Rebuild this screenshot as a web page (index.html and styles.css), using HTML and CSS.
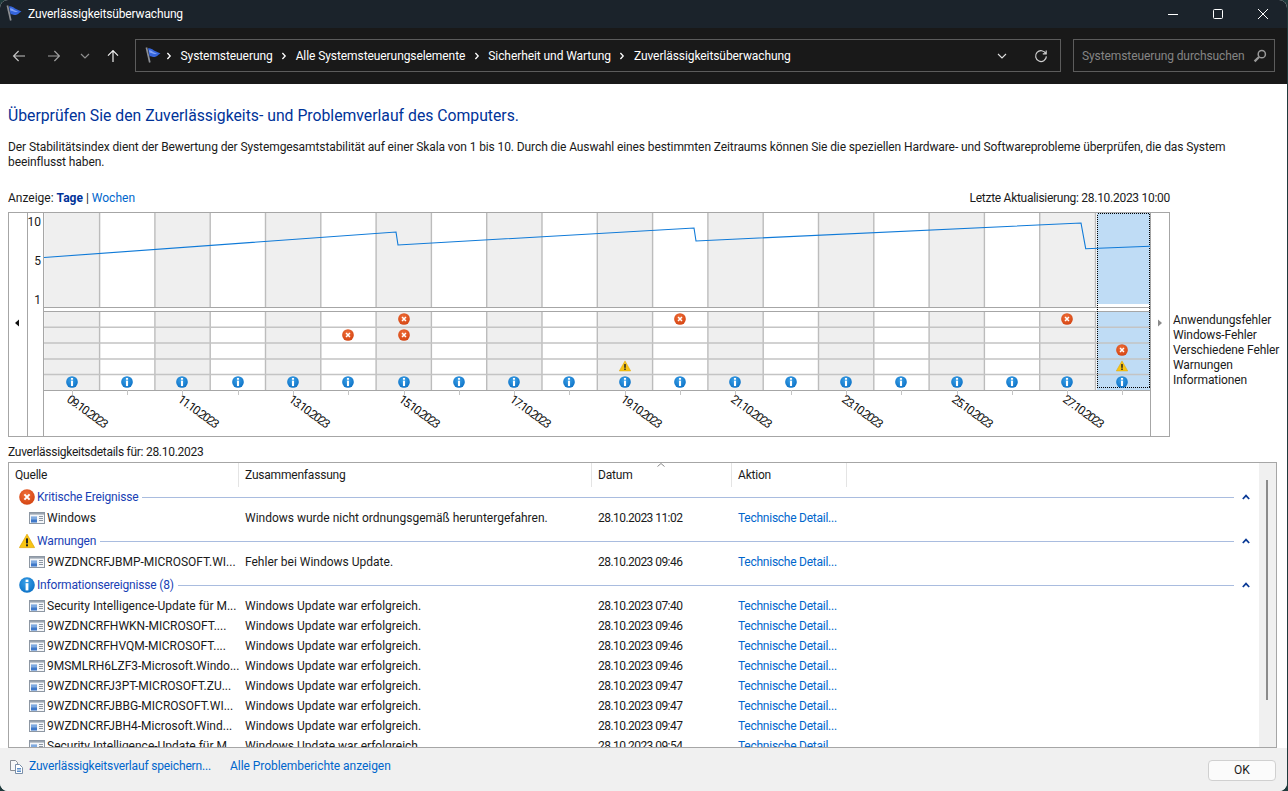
FILE: index.html
```html
<!DOCTYPE html>
<html lang="de">
<head>
<meta charset="utf-8">
<title>Zuverlässigkeitsüberwachung</title>
<link rel="stylesheet" href="styles.css">
</head>
<body>
<svg class="defs" aria-hidden="true">
  <defs>
    <radialGradient id="gErr" cx="45%" cy="35%" r="70%"><stop offset="0" stop-color="#f0703a"/><stop offset="1" stop-color="#d2410f"/></radialGradient>
    <radialGradient id="gInfo" cx="45%" cy="35%" r="70%"><stop offset="0" stop-color="#3aa0e8"/><stop offset="1" stop-color="#0a6fc4"/></radialGradient>
    <symbol id="err" viewBox="0 0 16 16"><circle cx="8" cy="8" r="7.8" fill="url(#gErr)"/><path d="M5.4 5.4l5.2 5.2M10.6 5.4l-5.2 5.2" stroke="#fff" stroke-width="2" fill="none"/></symbol>
    <symbol id="info" viewBox="0 0 16 16"><circle cx="8" cy="8" r="7.8" fill="url(#gInfo)"/><rect x="6.6" y="2.6" width="2.8" height="2.4" fill="#fff"/><rect x="6.6" y="6.2" width="2.8" height="7.2" fill="#fff"/></symbol>
    <symbol id="warn" viewBox="0 0 16 16"><path d="M8 1.2L15.6 14.6H.4Z" fill="#f8c514" stroke="#e0a400" stroke-width=".7" stroke-linejoin="round"/><rect x="7" y="5.4" width="2" height="5" fill="#222"/><rect x="7" y="11.3" width="2" height="2" fill="#222"/></symbol>
    <symbol id="flag" viewBox="0 0 17 18"><path d="M1.4 .5L4.8 15.5" stroke="#8c8f94" stroke-width="1.7" fill="none"/><path d="M3 1.5C5 .8 7 2 9 3.5L15.5 6.5C13 7.5 12 10 9 10C7.5 10 6 8.5 4.6 9.5Z" fill="#3565dc"/><path d="M4 3.4C6 3 7 4.6 9 5.6L12 6.8C10 7.6 8 6.8 4.4 5.6Z" fill="#7fa0f5"/></symbol>
    <symbol id="rowicon" viewBox="0 0 16 12"><rect x=".5" y=".5" width="15" height="11" fill="#f4f6f9" stroke="#8d97a3"/><rect x="1" y="1" width="14" height="1.6" fill="#9aa4b0"/><rect x="2" y="4.4" width="6" height="6" fill="#7faae0"/><rect x="2" y="7.5" width="6" height="2.9" fill="#3f78c8"/><path d="M10 4.5h4M10 6.5h4M10 8.5h4" stroke="#8d97a3" fill="none"/></symbol>
    <symbol id="up" viewBox="0 0 8 6"><path d="M.8 5L4 1.6 7.2 5" stroke="#0a3a96" stroke-width="1.7" fill="none"/></symbol>
    <symbol id="crumb" viewBox="0 0 6 8"><path d="M1.4 1l2.8 3-2.8 3" stroke="#fff" stroke-width="1.3" fill="none"/></symbol>
  </defs>
</svg>

<div class="window">
  <header class="titlebar">
    <svg class="ico-flag"><use href="#flag"/></svg>
    <span class="title">Zuverlässigkeitsüberwachung</span>
    <div class="winctrls">
      <svg class="winbtn" viewBox="0 0 12 12"><path d="M1 6.5h10" stroke="#fff" fill="none"/></svg>
      <svg class="winbtn" viewBox="0 0 12 12"><rect x="1.5" y="1.5" width="9" height="9" rx="1" stroke="#fff" fill="none"/></svg>
      <svg class="winbtn" viewBox="0 0 12 12"><path d="M1 1l10 10M11 1L1 11" stroke="#fff" fill="none"/></svg>
    </div>
  </header>

  <nav class="navbar">
    <svg class="navbtn" viewBox="0 0 14 14"><path d="M13 7H1.6M6.6 2L1.6 7l5 5" stroke="#c4c4c4" stroke-width="1.2" fill="none"/></svg>
    <svg class="navbtn" viewBox="0 0 14 14"><path d="M1 7h11.4M7.4 2l5 5-5 5" stroke="#a0a0a0" stroke-width="1.2" fill="none"/></svg>
    <svg class="navbtn small" viewBox="0 0 10 6"><path d="M1 1l4 4 4-4" stroke="#8e8e8e" stroke-width="1.2" fill="none"/></svg>
    <svg class="navbtn up" viewBox="0 0 14 14"><path d="M7 13V1.6M2 6.6l5-5 5 5" stroke="#f0f0f0" stroke-width="1.2" fill="none"/></svg>
    <div class="address">
      <svg class="ico-flag"><use href="#flag"/></svg>
      <svg class="crumb-sep"><use href="#crumb"/></svg><span>Systemsteuerung</span>
      <svg class="crumb-sep"><use href="#crumb"/></svg><span>Alle Systemsteuerungselemente</span>
      <svg class="crumb-sep"><use href="#crumb"/></svg><span>Sicherheit und Wartung</span>
      <svg class="crumb-sep"><use href="#crumb"/></svg><span>Zuverlässigkeitsüberwachung</span>
      <svg class="addr-drop" viewBox="0 0 10 6"><path d="M1 1l4 4 4-4" stroke="#e0e0e0" stroke-width="1.1" fill="none"/></svg>
      <svg class="addr-refresh" viewBox="0 0 14 14"><path d="M11.8 4.6A5.4 5.4 0 1 0 12.4 7.4M12.2 1.4v3.4H8.8" stroke="#cfcfcf" stroke-width="1.2" fill="none"/></svg>
    </div>
    <div class="search">
      <span>Systemsteuerung durchsuchen</span>
      <svg class="search-ico" viewBox="0 0 14 14"><circle cx="8.8" cy="5.2" r="3.6" stroke="#9a9a9a" stroke-width="1.5" fill="none"/><path d="M6 8L1.6 12.4" stroke="#9a9a9a" stroke-width="2.2" fill="none"/></svg>
    </div>
  </nav>

  <main class="content">
    <h1>Überprüfen Sie den Zuverlässigkeits- und Problemverlauf des Computers.</h1>
    <p class="intro">Der Stabilitätsindex dient der Bewertung der Systemgesamtstabilität auf einer Skala von 1 bis 10. Durch die Auswahl eines bestimmten Zeitraums können Sie die speziellen Hardware- und Softwareprobleme überprüfen, die das System beeinflusst haben.</p>

    <div class="viewbar">
      <div>Anzeige: <a class="active">Tage</a> | <a>Wochen</a></div>
      <div class="updated">Letzte Aktualisierung: 28.10.2023 10:00</div>
    </div>

    <div class="chart-row">
      <svg class="chart" viewBox="8 212 1162 225" width="1162" height="225">
        <path fill="#efefef" d="M44.3 213h55.3v177h-55.3zM154.9 213h55.3v177h-55.3zM265.5 213h55.3v177h-55.3zM376.1 213h55.3v177h-55.3zM486.7 213h55.3v177h-55.3zM597.3 213h55.3v177h-55.3zM707.9 213h55.3v177h-55.3zM818.5 213h55.3v177h-55.3zM929.1 213h55.3v177h-55.3zM1039.7 213h55.3v177h-55.3z"/>
        <rect x="1097" y="213" width="53" height="177" fill="#bfdcf5"/>
        <rect x="1097" y="304" width="53" height="3" fill="#fff"/>
        <path stroke="#bcbcbc" stroke-width="1.4" fill="none" d="M99.6 213v177M154.9 213v177M210.2 213v177M265.5 213v177M320.8 213v177M376.1 213v177M431.4 213v177M486.7 213v177M542 213v177M597.3 213v177M652.6 213v177M707.9 213v177M763.2 213v177M818.5 213v177M873.8 213v177M929.1 213v177M984.4 213v177M1039.7 213v177M1095.5 213v177"/>
        <rect x="44" y="307" width="1106" height="5" fill="#fff"/>
        <path stroke="#c4c4c4" stroke-width="1.5" fill="none" d="M44 327.3h1106M44 343h1106M44 359h1106M44 374.6h1106"/>
        <path stroke="#a6a6a6" fill="none" d="M44 307.5h1106M44 311.5h1106M44 390.5h1106"/>
        <rect x="8.5" y="212.5" width="1161" height="224" fill="none" stroke="#a6a6a6"/>
        <path stroke="#a6a6a6" fill="none" d="M27.5 212v225M43.5 212v225M1150.5 212v225"/>
        <rect class="focus" x="1097.5" y="213.5" width="52" height="174" fill="none" stroke="#000" stroke-dasharray="1 1"/>
        <polyline fill="none" stroke="#0f7ad8" stroke-width="1.1" points="44,257.5 396,232 398,245 694,228 696,241 1081,223 1085.7,248.7 1150,246.3"/>
        <path fill="#111" d="M19 319.5v7l-4-3.5z"/>
        <path fill="#8a8a8a" d="M1158 319.5v7l4-3.5z"/>
        <g class="axis">
          <text x="41" y="226">10</text>
          <text x="41" y="265">5</text>
          <text x="41" y="304">1</text>
        </g>
        <path stroke="#c4c4c4" fill="none" d="M72.5 390v5M127.5 390v5M182.5 390v5M238.5 390v5M293.5 390v5M348.5 390v5M404.5 390v5M459.5 390v5M514.5 390v5M569.5 390v5M625.5 390v5M680.5 390v5M735.5 390v5M791.5 390v5M846.5 390v5M901.5 390v5M957.5 390v5M1012.5 390v5M1067.5 390v5M1122.5 390v5"/>
        <use href="#info" x="66" y="376" width="12" height="12"/><use href="#info" x="121" y="376" width="12" height="12"/><use href="#info" x="176" y="376" width="12" height="12"/><use href="#info" x="232" y="376" width="12" height="12"/><use href="#info" x="287" y="376" width="12" height="12"/><use href="#info" x="342" y="376" width="12" height="12"/><use href="#info" x="398" y="376" width="12" height="12"/><use href="#info" x="453" y="376" width="12" height="12"/><use href="#info" x="508" y="376" width="12" height="12"/><use href="#info" x="563" y="376" width="12" height="12"/><use href="#info" x="619" y="376" width="12" height="12"/><use href="#info" x="674" y="376" width="12" height="12"/><use href="#info" x="729" y="376" width="12" height="12"/><use href="#info" x="785" y="376" width="12" height="12"/><use href="#info" x="840" y="376" width="12" height="12"/><use href="#info" x="895" y="376" width="12" height="12"/><use href="#info" x="951" y="376" width="12" height="12"/><use href="#info" x="1006" y="376" width="12" height="12"/><use href="#info" x="1061" y="376" width="12" height="12"/><use href="#info" x="1116" y="376" width="12" height="12"/>
        <use href="#err" x="398" y="313" width="12" height="12"/><use href="#err" x="674" y="313" width="12" height="12"/><use href="#err" x="1061" y="313" width="12" height="12"/>
        <use href="#err" x="342" y="329" width="12" height="12"/><use href="#err" x="398" y="329" width="12" height="12"/>
        <use href="#err" x="1116" y="344" width="12" height="12"/>
        <use href="#warn" x="619" y="360" width="12" height="12"/><use href="#warn" x="1116" y="360" width="12" height="12"/>
        <g class="dates">
          <text transform="translate(66 401) rotate(36)">09.10.2023</text>
          <text transform="translate(177 401) rotate(36)">11.10.2023</text>
          <text transform="translate(288 401) rotate(36)">13.10.2023</text>
          <text transform="translate(398 401) rotate(36)">15.10.2023</text>
          <text transform="translate(509 401) rotate(36)">17.10.2023</text>
          <text transform="translate(620 401) rotate(36)">19.10.2023</text>
          <text transform="translate(730 401) rotate(36)">21.10.2023</text>
          <text transform="translate(841 401) rotate(36)">23.10.2023</text>
          <text transform="translate(951 401) rotate(36)">25.10.2023</text>
          <text transform="translate(1062 401) rotate(36)">27.10.2023</text>
        </g>
      </svg>
      <ul class="legend">
        <li>Anwendungsfehler</li>
        <li>Windows-Fehler</li>
        <li>Verschiedene Fehler</li>
        <li>Warnungen</li>
        <li>Informationen</li>
      </ul>
    </div>

    <div class="details-label">Zuverlässigkeitsdetails für: 28.10.2023</div>

    <section class="table">
      <div class="table-main">
        <div class="thead">
          <div>Quelle</div><div>Zusammenfassung</div><div class="th-date">Datum<svg class="sort" viewBox="0 0 8 4"><path d="M.5 3.5L4 .5l3.5 3" stroke="#8a8a8a" fill="none"/></svg></div><div>Aktion</div>
        </div>
        <div class="tbody">
          <div class="group"><svg class="group-ico"><use href="#err"/></svg><span>Kritische Ereignisse</span><i></i><svg class="group-up"><use href="#up"/></svg></div>
          <div class="row"><div class="src"><svg class="row-ico"><use href="#rowicon"/></svg>Windows</div><div>Windows wurde nicht ordnungsgemäß heruntergefahren.</div><div>28.10.2023 11:02</div><a>Technische Detail...</a></div>
          <div class="group"><svg class="group-ico"><use href="#warn"/></svg><span>Warnungen</span><i></i><svg class="group-up"><use href="#up"/></svg></div>
          <div class="row"><div class="src"><svg class="row-ico"><use href="#rowicon"/></svg>9WZDNCRFJBMP-MICROSOFT.WI...</div><div>Fehler bei Windows Update.</div><div>28.10.2023 09:46</div><a>Technische Detail...</a></div>
          <div class="group"><svg class="group-ico"><use href="#info"/></svg><span>Informationsereignisse (8)</span><i></i><svg class="group-up"><use href="#up"/></svg></div>
          <div class="row"><div class="src"><svg class="row-ico"><use href="#rowicon"/></svg>Security Intelligence-Update für M...</div><div>Windows Update war erfolgreich.</div><div>28.10.2023 07:40</div><a>Technische Detail...</a></div>
          <div class="row"><div class="src"><svg class="row-ico"><use href="#rowicon"/></svg>9WZDNCRFHWKN-MICROSOFT....</div><div>Windows Update war erfolgreich.</div><div>28.10.2023 09:46</div><a>Technische Detail...</a></div>
          <div class="row"><div class="src"><svg class="row-ico"><use href="#rowicon"/></svg>9WZDNCRFHVQM-MICROSOFT....</div><div>Windows Update war erfolgreich.</div><div>28.10.2023 09:46</div><a>Technische Detail...</a></div>
          <div class="row"><div class="src"><svg class="row-ico"><use href="#rowicon"/></svg>9MSMLRH6LZF3-Microsoft.Windo...</div><div>Windows Update war erfolgreich.</div><div>28.10.2023 09:46</div><a>Technische Detail...</a></div>
          <div class="row"><div class="src"><svg class="row-ico"><use href="#rowicon"/></svg>9WZDNCRFJ3PT-MICROSOFT.ZU...</div><div>Windows Update war erfolgreich.</div><div>28.10.2023 09:47</div><a>Technische Detail...</a></div>
          <div class="row"><div class="src"><svg class="row-ico"><use href="#rowicon"/></svg>9WZDNCRFJBBG-MICROSOFT.WI...</div><div>Windows Update war erfolgreich.</div><div>28.10.2023 09:47</div><a>Technische Detail...</a></div>
          <div class="row"><div class="src"><svg class="row-ico"><use href="#rowicon"/></svg>9WZDNCRFJBH4-Microsoft.Wind...</div><div>Windows Update war erfolgreich.</div><div>28.10.2023 09:47</div><a>Technische Detail...</a></div>
          <div class="row"><div class="src"><svg class="row-ico"><use href="#rowicon"/></svg>Security Intelligence-Update für M...</div><div>Windows Update war erfolgreich.</div><div>28.10.2023 09:54</div><a>Technische Detail...</a></div>
        </div>
      </div>
      <div class="scrollbar"><div class="thumb"></div></div>
    </section>
  </main>

  <footer class="footer">
    <svg class="doc-ico" viewBox="0 0 15 16"><path d="M1.5 1.5h5l2 2v8h-7z" fill="#f8f8f8" stroke="#8a8f96"/><path d="M6.5 5.5h4l3 3v6h-7z" fill="#fff" stroke="#7a8fa8"/><path d="M8 9.5h4M8 11h4M8 12.5h4" stroke="#5c8fcb" fill="none"/></svg>
    <a>Zuverlässigkeitsverlauf speichern...</a>
    <a class="second">Alle Problemberichte anzeigen</a>
    <button class="ok" type="button">OK</button>
  </footer>
</div>
</body>
</html>
```

FILE: styles.css
```css
* { box-sizing: border-box; }
html, body { margin: 0; padding: 0; height: 100%; }
body {
  background: #1f3a3c;
  font-family: Roboto, "Open Sans", "Liberation Sans", sans-serif;
  font-size: 12px;
  color: #1a1a1a;
  overflow: hidden;
}
.defs { display: block; width: 0; height: 0; }
.window {
  width: 1287px;
  height: 791px;
  display: flex;
  flex-direction: column;
  border-radius: 8px;
  overflow: hidden;
  background: #fff;
}

/* title bar */
.titlebar {
  height: 28px;
  flex: none;
  display: flex;
  align-items: center;
  background: #1b232b;
  color: #fff;
  padding-left: 6px;
}
.ico-flag { width: 17px; height: 18px; flex: none; }
.title { margin-left: 5px; letter-spacing: -0.15px; }
.winctrls { margin-left: auto; display: flex; gap: 33px; padding-right: 18px; }
.winbtn { width: 12px; height: 12px; }

/* nav */
.navbar {
  height: 56px;
  flex: none;
  display: flex;
  align-items: center;
  background: #191919;
  color: #fff;
  padding: 0 12px 1px 12px;
}
.navbtn { width: 14px; height: 14px; margin-right: 21px; flex: none; }
.navbtn.small { width: 10px; height: 6px; margin-right: 16px; margin-left: -2px; }
.navbtn.up { margin-right: 15px; }
.address {
  width: 926px;
  height: 33px;
  display: flex;
  align-items: center;
  border: 1px solid #5c5c5c;
  padding-left: 9px;
  letter-spacing: -0.08px;
}
.crumb-sep { width: 6px; height: 8px; margin: 0 8.5px; flex: none; }
.address .ico-flag + .crumb-sep { margin-left: 4px; }
.addr-drop { width: 10px; height: 6px; margin-left: auto; flex: none; }
.addr-refresh { width: 14px; height: 14px; margin: 0 12px 0 27px; flex: none; }
.search {
  width: 202px;
  height: 33px;
  margin-left: 12px;
  display: flex;
  align-items: center;
  justify-content: space-between;
  border: 1px solid #5c5c5c;
  padding: 0 7px 0 8px;
  color: #858585;
  letter-spacing: -0.1px;
}
.search-ico { width: 14px; height: 14px; flex: none; }

/* content */
.content {
  flex: 1;
  min-height: 0;
  display: flex;
  flex-direction: column;
  padding: 21px 10px 0 8px;
}
h1 {
  margin: 0;
  font-size: 15.75px;
  font-weight: 400;
  line-height: 21px;
  color: #003399;
}
.intro {
  margin: 14px 0 0;
  line-height: 15px;
  width: 1240px;
  letter-spacing: -0.1px;
}
.viewbar {
  margin-top: 19px;
  width: 1162px;
  height: 20px;
  display: flex;
  justify-content: space-between;
  align-items: center;
}
.updated { letter-spacing: -0.28px; }
.viewbar a { color: #0066cc; }
.viewbar a.active { color: #003399; font-weight: 700; }
.chart-row { display: flex; margin-top: 4px; height: 225px; flex: none; }
.chart { display: block; flex: none; }
.focus { shape-rendering: crispEdges; }
.axis text { font-size: 12px; text-anchor: end; fill: #1a1a1a; }
.dates text { font-size: 12px; letter-spacing: -1.4px; fill: #111; }
.legend {
  list-style: none;
  margin: 0 0 0 3px;
  padding: 101px 0 0;
  line-height: 15px;
  white-space: nowrap;
  letter-spacing: -0.1px;
}
.details-label { margin-top: 7px; height: 20px; line-height: 17px; letter-spacing: -0.28px; }

/* table */
.table {
  flex: none;
  height: 286px;
  width: 1269px;
  display: flex;
  border: 1px solid #a6a6a6;
}
.table-main { flex: 1; min-width: 0; display: flex; flex-direction: column; }
.thead {
  height: 24px;
  flex: none;
  display: grid;
  grid-template-columns: 230px 353px 140px 115px;
  align-items: stretch;
}
.thead > div {
  border-right: 1px solid #e4e4e4;
  padding-left: 6px;
  line-height: 24px;
  position: relative;
  letter-spacing: -0.2px;
}
.sort { position: absolute; left: 65px; top: 0; width: 8px; height: 4px; }
.tbody { flex: 1; min-height: 0; overflow: hidden; }
.group {
  height: 20px;
  margin-top: 3px;
  display: flex;
  align-items: center;
  padding-left: 10px;
  color: #1a3fb5;
  letter-spacing: -0.17px;
}
.group:first-child { margin-top: 0; }
.group-ico { width: 16px; height: 16px; flex: none; }
.group span { margin-left: 2px; }
.group i { flex: 1; height: 1px; background: #a9bcdf; margin-left: 4px; }
.group-up { width: 8px; height: 6px; margin: 0 9px 0 8px; flex: none; }
.row {
  height: 20px;
  display: grid;
  grid-template-columns: 230px 353px 140px 115px;
  align-items: center;
  white-space: nowrap;
  margin-top: 1px;
}
.row + .row { margin-top: 0; }
.row > div, .row > a { padding-left: 6px; }
.row > div:nth-child(3) { letter-spacing: -0.55px; }
.row .src { display: flex; align-items: center; padding-left: 20px; }
.row a { color: #0066cc; letter-spacing: -0.25px; }
.row-ico { width: 16px; height: 12px; margin-right: 2px; flex: none; }
.scrollbar {
  width: 17px;
  flex: none;
  background: #f0f0f0;
  padding: 17px 0 0 7px;
}
.thumb { width: 2px; height: 220px; background: #8b8b8b; }

/* footer */
.footer {
  flex: none;
  height: 43px;
  display: flex;
  align-items: center;
  background: #f0f0f0;
  padding: 0 11px 0 9px;
}
.footer a { color: #0066cc; margin-left: 5px; margin-top: -7px; letter-spacing: -0.16px; }
.footer .second { margin-left: 19px; letter-spacing: -0.05px; }
.doc-ico { width: 15px; height: 16px; flex: none; margin-top: -6px; }
.ok {
  margin-left: auto;
  width: 68px;
  height: 21px;
  margin-top: 1px;
  background: #fbfbfb;
  border: 1px solid #d0d0d0;
  border-radius: 4px;
  font: inherit;
  color: #1a1a1a;
  padding: 0;
}
```
